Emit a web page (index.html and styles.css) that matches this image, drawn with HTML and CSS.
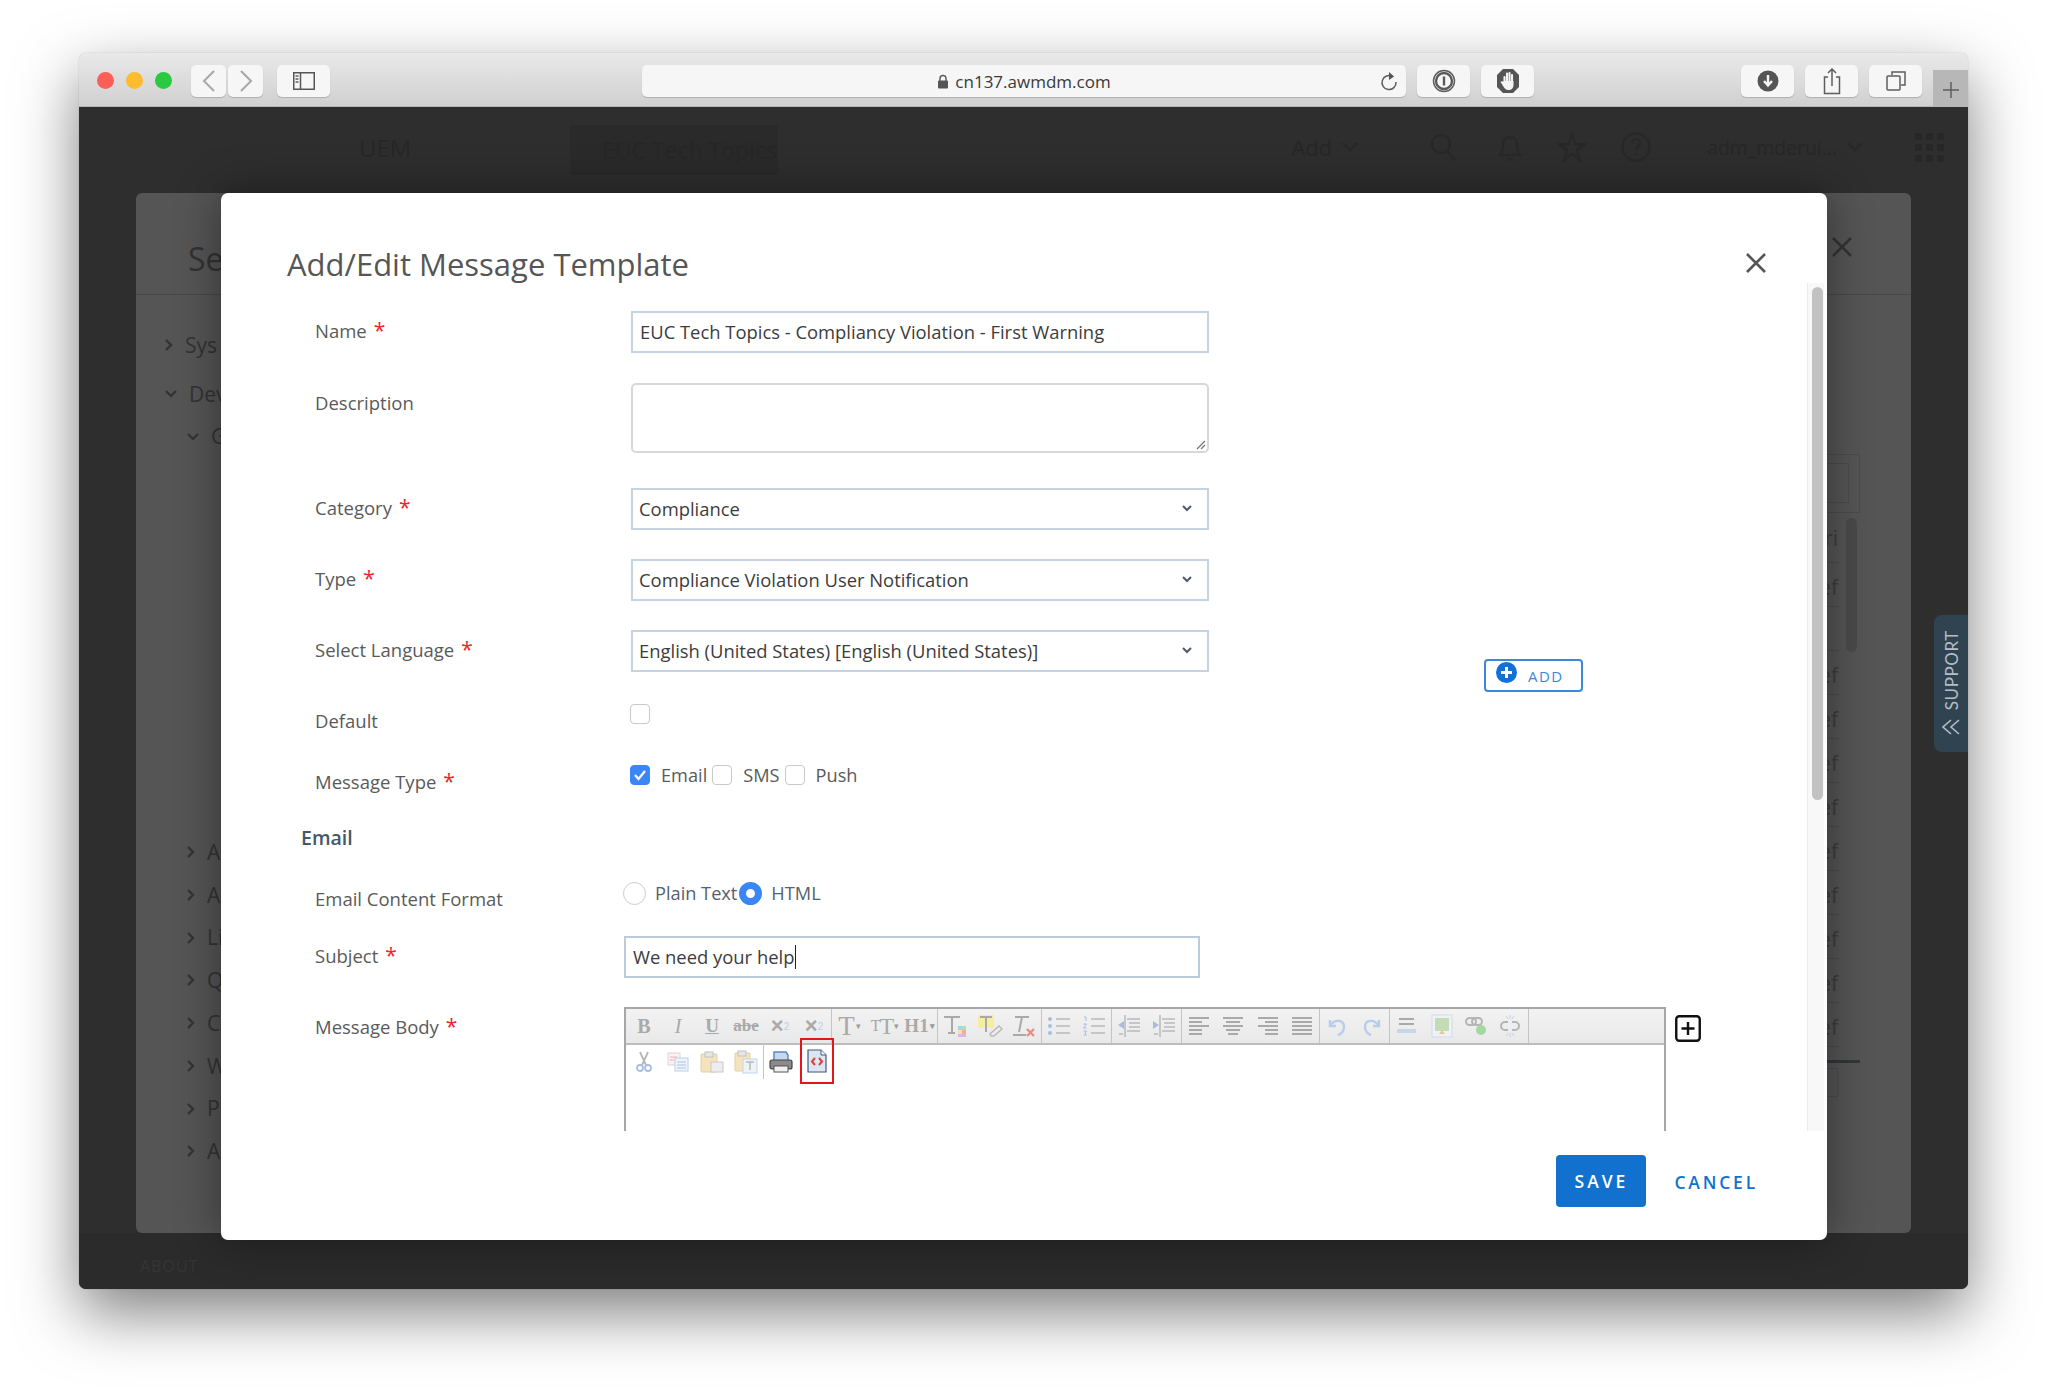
FILE: index.html
```html
<!DOCTYPE html>
<html lang="en">
<head>
<meta charset="utf-8">
<title>Add/Edit Message Template</title>
<link rel="stylesheet" href="styles.css">
</head>
<body>
<div class="window">
  <div class="chrome">
    <div class="lights"><span class="light red"></span><span class="light yellow"></span><span class="light green"></span></div>
    <div class="nav">
      <div class="cbtn back"><svg width="14" height="24" viewBox="0 0 14 24"><path d="M12 2 2 12l10 10" class="ic-nav"/></svg></div>
      <div class="cbtn back"><svg width="14" height="24" viewBox="0 0 14 24"><path d="M2 2l10 10L2 22" class="ic-nav"/></svg></div>
    </div>
    <div class="cbtn wide side"><svg width="22" height="18" viewBox="0 0 22 18"><rect x=".75" y=".75" width="20.5" height="16.5" class="ic-line"/><path d="M7.5 1v16" class="ic-line"/><path d="M2.5 4h3M2.5 7h3M2.5 10h3" class="ic-thin"/></svg></div>
    <div class="address">
      <div class="url"><svg width="12" height="15" viewBox="0 0 12 15"><path d="M3 7V4.500a3 3 0 0 1 6 0V7" class="ic-thin"/><rect x="1" y="6.500" width="10" height="8" rx="1" class="ic-fill"/></svg><span>cn137.awmdm.com</span></div>
      <svg class="reload" width="18" height="22" viewBox="0 0 18 22"><path d="M12.500 6.500A7 7 0 1 0 16 12" class="ic-thin"/><path d="M9 2l5 4.500L9 10z" class="ic-fill"/></svg>
    </div>
    <div class="cbtn wide ext"><svg width="24" height="24" viewBox="0 0 24 24"><circle cx="12" cy="12" r="10.500" class="ic-thin"/><circle cx="12" cy="12" r="8" class="ic-ring"/><path d="M12 7.500v9" class="ic-ring"/></svg></div>
    <div class="cbtn wide ext"><svg width="24" height="26" viewBox="0 0 24 26"><path d="M7 1h10l6 6v12l-6 6H7l-6-6V7z" class="ic-fill"/><path d="M8.500 15V9M11 13V5.500M13.500 13V5M16 14V7" class="ic-hand"/><path d="M7.500 13h10v4c0 3-2 5-5 5s-4-1.500-6-5l-2-3c1-1 2-1 3 0z" class="ic-white"/></svg></div>
    <div class="cbtn wide right-first"><svg width="22" height="22" viewBox="0 0 22 22"><circle cx="11" cy="11" r="10.500" class="ic-fill"/><path d="M11 5v10M7 11l4 4.500 4-4.500" class="ic-whiteline"/></svg></div>
    <div class="cbtn wide right-next"><svg width="18" height="28" viewBox="0 0 18 28"><path d="M5 10H1.500v16.500h15V10H13M9 19V2M5 6l4-4 4 4" class="ic-thin"/></svg></div>
    <div class="cbtn wide right-next"><svg width="20" height="20" viewBox="0 0 20 20"><path d="M6 4V1h13v13h-4" class="ic-thin"/><rect x="1" y="5" width="13" height="14" rx="1" class="ic-thin"/></svg></div>
    <div class="newtab"><svg width="16" height="16" viewBox="0 0 16 16"><path d="M8 0v16M0 8h16" class="ic-thin"/></svg></div>
  </div>

  <div class="page">
    <header class="apphead">
      <span class="dim-brand">UEM</span>
      <div class="dim-org">EUC Tech Topics</div>
      <div class="dim-tools">
        <span class="dim-add">Add</span>
        <svg class="dim-chev" width="16" height="10" viewBox="0 0 16 10"><path d="M1 1l7 7 7-7" class="ic-dim"/></svg>
        <svg class="dim-search" width="28" height="30" viewBox="0 0 28 30"><circle cx="12" cy="12" r="9" class="ic-dim"/><path d="M18 19l8 9" class="ic-dim"/></svg>
        <svg class="dim-bell" width="26" height="30" viewBox="0 0 26 30"><path d="M3 23c3-3 3-7 3-11a7 7 0 0 1 14 0c0 4 0 8 3 11zM10 27h6" class="ic-dim"/></svg>
        <svg class="dim-icon" width="28" height="30" viewBox="0 0 28 30"><path d="M14 2l3.500 10H27l-8 6 3 10-8-6-8 6 3-10-8-6h9.500z" class="ic-dim"/></svg>
        <svg class="dim-icon" width="30" height="30" viewBox="0 0 30 30"><circle cx="15" cy="15" r="13.500" class="ic-dim"/><path d="M11 11c0-5 8-5 8 0 0 3-4 3-4 7M15 21v2" class="ic-dim"/></svg>
        <span class="dim-user">adm_mderui...</span>
        <svg class="dim-chev" width="16" height="10" viewBox="0 0 16 10"><path d="M1 1l7 7 7-7" class="ic-dim"/></svg>
        <div class="dim-apps"><i></i><i></i><i></i><i></i><i></i><i></i><i></i><i></i><i></i></div>
      </div>
    </header>

    <section class="panel">
      <div class="panel-head"><span class="panel-title">Se</span>
        <svg width="20" height="20" viewBox="0 0 20 20"><path d="M1 1l18 18M19 1 1 19" class="ic-panelx"/></svg>
      </div>
      <div class="panel-body">
        <ul class="tree">
          <li class="tree-item"><svg width="8" height="12" viewBox="0 0 8 12"><path d="M1 1l5 5-5 5" class="ic-tree"/></svg>Sys</li>
          <li class="tree-item tree-dev"><svg width="12" height="8" viewBox="0 0 12 8"><path d="M1 1l5 5 5-5" class="ic-tree"/></svg>Dev</li>
          <li class="tree-item tree-sub tree-g"><svg width="12" height="8" viewBox="0 0 12 8"><path d="M1 1l5 5 5-5" class="ic-tree"/></svg>G</li>
          <li class="tree-item tree-sub tree-first"><svg width="8" height="12" viewBox="0 0 8 12"><path d="M1 1l5 5-5 5" class="ic-tree"/></svg>A</li>
          <li class="tree-item tree-sub"><svg width="8" height="12" viewBox="0 0 8 12"><path d="M1 1l5 5-5 5" class="ic-tree"/></svg>A</li>
          <li class="tree-item tree-sub"><svg width="8" height="12" viewBox="0 0 8 12"><path d="M1 1l5 5-5 5" class="ic-tree"/></svg>Li</li>
          <li class="tree-item tree-sub"><svg width="8" height="12" viewBox="0 0 8 12"><path d="M1 1l5 5-5 5" class="ic-tree"/></svg>Q</li>
          <li class="tree-item tree-sub"><svg width="8" height="12" viewBox="0 0 8 12"><path d="M1 1l5 5-5 5" class="ic-tree"/></svg>C</li>
          <li class="tree-item tree-sub"><svg width="8" height="12" viewBox="0 0 8 12"><path d="M1 1l5 5-5 5" class="ic-tree"/></svg>W</li>
          <li class="tree-item tree-sub"><svg width="8" height="12" viewBox="0 0 8 12"><path d="M1 1l5 5-5 5" class="ic-tree"/></svg>P</li>
          <li class="tree-item tree-sub"><svg width="8" height="12" viewBox="0 0 8 12"><path d="M1 1l5 5-5 5" class="ic-tree"/></svg>A</li>
        </ul>
        <div class="grid-side">
          <div class="grid-box"><div class="grid-box-inner"></div></div>
          <div class="grid-scroll"></div>
          <div class="grid-row grid-head">ri</div>
          <div class="grid-row">ef</div>
          <div class="grid-row"></div>
          <div class="grid-row">ef</div>
          <div class="grid-row">ef</div>
          <div class="grid-row">ef</div>
          <div class="grid-row">ef</div>
          <div class="grid-row">ef</div>
          <div class="grid-row">ef</div>
          <div class="grid-row">ef</div>
          <div class="grid-row">ef</div>
          <div class="grid-row">ef</div>
          <div class="grid-end"></div>
          <div class="grid-pager"></div>
        </div>
      </div>
    </section>

    <footer class="appfoot">ABOUT</footer>

    <aside class="support">
      <span class="support-text">SUPPORT</span>
      <svg width="18" height="16" viewBox="0 0 18 16"><path d="M9 1 1 8l8 7M17 1 9 8l8 7" class="ic-support"/></svg>
    </aside>

    <div class="modal">
      <div class="modal-head">
        <h1 class="modal-title">Add/Edit Message Template</h1>
        <svg class="modal-close" width="20" height="20" viewBox="0 0 20 20"><path d="M1 1l18 18M19 1 1 19" class="ic-close"/></svg>
      </div>
      <div class="modal-body">
        <form class="form">
          <div class="row row-name">
            <div class="label">Name<span class="req">*</span></div>
            <div class="field field-input">EUC Tech Topics - Compliancy Violation - First Warning</div>
          </div>
          <div class="row row-desc">
            <div class="label">Description</div>
            <div class="area"><svg class="resize" width="10" height="10" viewBox="0 0 10 10"><path d="M1 9l8-8M5 9l4-4" class="ic-resize"/></svg></div>
          </div>
          <div class="row row-select">
            <div class="label">Category<span class="req">*</span></div>
            <div class="field field-select">Compliance<svg width="10" height="7" viewBox="0 0 10 7"><path d="M1 1l4 4 4-4" class="ic-selchev"/></svg></div>
          </div>
          <div class="row row-select">
            <div class="label">Type<span class="req">*</span></div>
            <div class="field field-select">Compliance Violation User Notification<svg width="10" height="7" viewBox="0 0 10 7"><path d="M1 1l4 4 4-4" class="ic-selchev"/></svg></div>
          </div>
          <div class="row row-lang">
            <div class="label">Select Language<span class="req">*</span></div>
            <div class="field field-select">English (United States) [English (United States)]<svg width="10" height="7" viewBox="0 0 10 7"><path d="M1 1l4 4 4-4" class="ic-selchev"/></svg></div>
            <div class="add-btn"><svg width="21" height="21" viewBox="0 0 21 21"><circle cx="10.500" cy="10.500" r="10.500" class="ic-addc"/><path d="M10.500 5v11M5 10.500h11" class="ic-addp"/></svg><span>ADD</span></div>
          </div>
          <div class="row row-default">
            <div class="label label-tight">Default</div>
            <span class="check check-first"></span>
          </div>
          <div class="row row-msg">
            <div class="label label-tight">Message Type<span class="req">*</span></div>
            <div class="opts">
              <span class="check check-on check-first"><svg width="14" height="12" viewBox="0 0 14 12"><path d="M2 6l3.500 4L12 2" class="ic-check"/></svg></span>
              <span class="opt-text">Email</span>
              <span class="check"></span>
              <span class="opt-text">SMS</span>
              <span class="check"></span>
              <span class="opt-text">Push</span>
            </div>
          </div>
          <h2 class="section">Email</h2>
          <div class="row row-format">
            <div class="label label-shift label-tight">Email Content Format</div>
            <div class="opts">
              <span class="radio"></span>
              <span class="opt-text opt-dark">Plain Text</span>
              <span class="radio radio-on"></span>
              <span class="opt-text opt-dark">HTML</span>
            </div>
          </div>
          <div class="row row-subject">
            <div class="label label-shift">Subject<span class="req">*</span></div>
            <div class="field field-input field-subject">We need your help<span class="caret"></span></div>
          </div>
          <div class="row row-body">
            <div class="label label-shift">Message Body<span class="req">*</span></div>
            <div class="editor">
              <div class="tb-row">
                <div class="tb-group">
                  <span class="tb tb-b">B</span><span class="tb tb-i">I</span><span class="tb tb-u">U</span><span class="tb tb-s">abe</span><span class="tb tb-x">×<sub>2</sub></span><span class="tb tb-x">×<sup>2</sup></span>
                </div>
                <div class="tb-group tb-font">
                  <span class="tb tb-t">T<small>▾</small></span><span class="tb tb-t tb-tt"><em>T</em>T<small>▾</small></span><span class="tb tb-t tb-h">H1<small>▾</small></span>
                </div>
                <div class="tb-group tb-wide">
                  <span class="tb"><svg width="26" height="24" viewBox="0 0 26 24"><path d="M2 3h16M10 3v16M6 19h7" class="ic-tb2"/><rect x="16" y="12" width="4" height="4" class="c-blue"/><rect x="20" y="12" width="4" height="4" class="c-green"/><rect x="16" y="16" width="4" height="4" class="c-yellow"/><rect x="20" y="16" width="4" height="4" class="c-red"/><rect x="16" y="20" width="8" height="3" class="c-violet"/></svg></span>
                  <span class="tb"><svg width="26" height="24" viewBox="0 0 26 24"><rect x="1" y="1" width="16" height="13" class="c-hi"/><path d="M3 3h12M9 3v15" class="ic-tb2"/><path d="M13 20l9-8 3 3-8 7h-3z" class="ic-tb1"/></svg></span>
                  <span class="tb"><svg width="26" height="24" viewBox="0 0 26 24"><path d="M4 3h14M11 3 8 18M2 21h13" class="ic-tb2"/><path d="M16 15l7 7M23 15l-7 7" class="ic-tbred"/></svg></span>
                </div>
                <div class="tb-group tb-wide">
                  <span class="tb"><svg width="24" height="22" viewBox="0 0 24 22"><path d="M9 4h14M9 11h14M9 18h14" class="ic-tb1"/><circle cx="3" cy="4" r="2" class="c-bullet"/><circle cx="3" cy="11" r="2" class="c-bullet"/><circle cx="3" cy="18" r="2" class="c-bullet"/></svg></span>
                  <span class="tb"><svg width="24" height="22" viewBox="0 0 24 22"><path d="M9 4h14M9 11h14M9 18h14" class="ic-tb1"/><path d="M2 2h2v4M1.500 9h3l-3 4h3M1.500 16h3l-1.500 2 1.500 2h-3" class="ic-num"/></svg></span>
                </div>
                <div class="tb-group tb-wide">
                  <span class="tb"><svg width="24" height="24" viewBox="0 0 24 24"><path d="M10 5h13M12 9h11M12 13h11M10 17h13M2 20h4M8 1v22" class="ic-tb1"/><path d="M1 11l6-4v8z" class="c-bullet"/></svg></span>
                  <span class="tb"><svg width="24" height="24" viewBox="0 0 24 24"><path d="M10 5h13M12 9h11M12 13h11M10 17h13M2 20h4M8 1v22" class="ic-tb1"/><path d="M7 11 1 7v8z" class="c-bullet"/></svg></span>
                </div>
                <div class="tb-group tb-wide">
                  <span class="tb"><svg width="22" height="20" viewBox="0 0 22 20"><path d="M1 2h20M1 6h13M1 10h20M1 14h13M1 18h13" class="ic-tb2"/></svg></span>
                  <span class="tb"><svg width="22" height="20" viewBox="0 0 22 20"><path d="M1 2h20M4 6h14M1 10h20M4 14h14M6 18h10" class="ic-tb2"/></svg></span>
                  <span class="tb"><svg width="22" height="20" viewBox="0 0 22 20"><path d="M1 2h20M8 6h13M1 10h20M8 14h13M8 18h13" class="ic-tb2"/></svg></span>
                  <span class="tb"><svg width="22" height="20" viewBox="0 0 22 20"><path d="M1 2h20M1 6h20M1 10h20M1 14h20M1 18h20" class="ic-tb2"/></svg></span>
                </div>
                <div class="tb-group tb-wide">
                  <span class="tb"><svg width="20" height="22" viewBox="0 0 20 22"><path d="M3 5v6h6M3 11c4-7 14-7 14 1 0 4-3 7-6 8" class="ic-hist"/></svg></span>
                  <span class="tb"><svg width="20" height="22" viewBox="0 0 20 22"><path d="M17 5v6h-6M17 11C13 4 3 4 3 12c0 4 3 7 6 8" class="ic-hist"/></svg></span>
                </div>
                <div class="tb-group tb-wide">
                  <span class="tb"><svg width="22" height="20" viewBox="0 0 22 20"><path d="M3 3h15M3 8h15" class="ic-tb2"/><rect x="1" y="13" width="19" height="4" class="c-hr"/></svg></span>
                  <span class="tb"><svg width="22" height="24" viewBox="0 0 22 24"><rect x="1" y="1" width="20" height="22" class="c-imgbox"/><rect x="4" y="4" width="14" height="13" class="c-img"/><path d="M8 20l3-4 3 4z" class="c-imgsun"/></svg></span>
                  <span class="tb"><svg width="22" height="22" viewBox="0 0 22 22"><rect x="1" y="3" width="10" height="7" rx="3.500" class="ic-link"/><rect x="7" y="3" width="10" height="7" rx="3.500" class="ic-link"/><circle cx="16" cy="15" r="5" class="c-linkg"/></svg></span>
                  <span class="tb"><svg width="22" height="24" viewBox="0 0 22 24"><path d="M9 8H6a4 4 0 0 0 0 8h3M13 8h3a4 4 0 0 1 0 8h-3" class="ic-link"/><path d="M11 1v4M7 2l2 3M15 2l-2 3M11 19v4M7 22l2-3M15 22l-2-3" class="ic-sparks"/></svg></span>
                </div>
              </div>
              <div class="tb-row2">
                <div class="tb-group tb-clip">
                  <span class="tb"><svg width="16" height="22" viewBox="0 0 16 22"><path d="M4 1l6 13M12 1 6 14" class="ic-cut"/><circle cx="4" cy="17" r="3" class="ic-cut2"/><circle cx="12" cy="17" r="3" class="ic-cut2"/></svg></span>
                  <span class="tb"><svg width="22" height="20" viewBox="0 0 22 20"><rect x="1" y="1" width="12" height="12" class="c-copy1"/><rect x="8" y="6" width="13" height="13" class="c-copy2"/><path d="M3 5h7M3 8h4" class="ic-redline"/><path d="M10 10h9M10 13h9M10 16h9" class="ic-blueline"/></svg></span>
                  <span class="tb"><svg width="24" height="22" viewBox="0 0 24 22"><rect x="1" y="3" width="16" height="18" rx="1" class="c-paste"/><rect x="5" y="1" width="8" height="5" class="c-clip"/><rect x="11" y="11" width="12" height="10" class="c-sheet"/></svg></span>
                  <span class="tb"><svg width="24" height="24" viewBox="0 0 24 24"><rect x="1" y="3" width="15" height="18" rx="1" class="c-paste"/><rect x="4" y="1" width="8" height="5" class="c-clip"/><rect x="9" y="9" width="14" height="14" class="c-sheet2"/><path d="M12 12h8M16 12v8" class="ic-tb1"/></svg></span>
                </div>
                <div class="tb-group tb-print">
                  <span class="tb"><svg width="24" height="22" viewBox="0 0 24 22"><path d="M5 10V1h12l2 3v6z" class="c-printp"/><rect x="1" y="9" width="22" height="9" rx="2" class="c-print"/><rect x="5" y="15" width="14" height="6" class="c-printo"/></svg></span>
                </div>
                <div class="source-btn"><svg width="20" height="24" viewBox="0 0 20 24"><path d="M1 1h13l5 5v17H1z" class="c-source"/><path d="M14 1v5h5" class="c-sourcef"/><path d="M8 9l-3 3.500L8 16M12 9l3 3.500-3 3.500" class="ic-srcred"/></svg></div>
              </div>
            </div>
            <svg class="expand" width="26" height="27" viewBox="0 0 26 27"><rect x="1.250" y="1.250" width="23.500" height="24.500" rx="3" class="ic-expand"/><path d="M13 7v13M6.500 13.500h13" class="ic-expand"/></svg>
          </div>
        </form>
        <div class="scrolltrack"><div class="scrollthumb"></div></div>
      </div>
      <div class="modal-foot">
        <div class="btn-save">SAVE</div>
        <div class="btn-cancel">CANCEL</div>
      </div>
    </div>
  </div>
</div>
</body>
</html>
```

FILE: styles.css
```css
* { box-sizing: border-box; }
html, body { margin: 0; padding: 0; }
body { width: 2048px; height: 1395px; background: #fff; font-family: "Open Sans", "Liberation Sans", sans-serif; overflow: hidden; }

.window { width: 1889px; height: 1236px; margin: 53px 0 0 79px; border-radius: 7px; box-shadow: 0 24px 62px rgba(0,0,0,.5), 0 0 1px rgba(0,0,0,.4); display: flex; flex-direction: column; overflow: hidden; position: relative; }

/* Safari chrome */
.chrome { height: 54px; flex: none; display: flex; align-items: flex-start; padding: 12px 0 0 18px; background: linear-gradient(#e9e9e9, #d0d0d0); border-bottom: 1px solid #b6b6b6; position: relative; }
.lights { display: flex; gap: 12px; width: 94px; padding-top: 7px; }
.light { width: 17px; height: 17px; border-radius: 50%; }
.red { background: #fb5f57; }
.yellow { background: #fdbb2e; }
.green { background: #29c941; }
.nav { display: flex; gap: 2px; }
.cbtn { height: 32px; background: #f6f6f6; border-radius: 5px; box-shadow: 0 1px 1px rgba(0,0,0,.18); display: flex; align-items: center; justify-content: center; }
.back { width: 35px; }
.wide { width: 53px; }
.side { margin-left: 14px; }
.address { width: 764px; height: 32px; margin-left: 312px; background: #f6f6f6; border-radius: 5px; box-shadow: 0 1px 1px rgba(0,0,0,.18); display: flex; align-items: center; position: relative; }
.url { flex: 1; display: flex; align-items: center; justify-content: center; gap: 6px; font-size: 17px; color: #3a3a3a; padding-left: 26px; }
.reload { margin-right: 8px; }
.ext { margin-left: 11px; }
.right-first { margin-left: 207px; }
.right-next { margin-left: 11px; }
.newtab { position: absolute; right: 0; bottom: 0; width: 35px; height: 36px; background: #b7b7b7; display: flex; align-items: center; justify-content: center; padding-top: 3px; }
.ic-nav { fill: none; stroke: #a8a8a8; stroke-width: 2; }
.ic-line { fill: none; stroke: #555; stroke-width: 1.5; }
.ic-thin { fill: none; stroke: #5e5e5e; stroke-width: 1.5; }
.ic-fill { fill: #555; }
.ic-ring { fill: none; stroke: #5a5a5a; stroke-width: 2.4; }
.ic-white { fill: #f4f4f4; }
.ic-hand { fill: none; stroke: #f4f4f4; stroke-width: 2.1; stroke-linecap: round; }
.ic-whiteline { fill: none; stroke: #f6f6f6; stroke-width: 2.4; }

/* dimmed page */
.page { flex: 1; display: flex; flex-direction: column; background: #2e2e2e; position: relative; }
.apphead { height: 86px; flex: none; display: flex; align-items: flex-start; color: #272727; }
.dim-brand { font-size: 24px; margin: 24px 0 0 280px; width: 211px; line-height: 34px; }
.dim-org { width: 208px; height: 50px; margin-top: 18px; background: #2a2a2a; border-radius: 4px; font-size: 23px; line-height: 50px; padding-left: 32px; white-space: nowrap; overflow: hidden; }
.dim-tools { margin-left: auto; display: flex; align-items: center; height: 40px; margin-top: 20px; }
.dim-add { font-size: 22px; }
.dim-chev { margin: 0 0 0 10px; }
.dim-search { margin-left: 71px; }
.dim-bell { margin-left: 40px; }
.dim-icon { margin-left: 35px; }
.dim-user { font-size: 19.4px; margin-left: 56px; white-space: nowrap; }
.dim-apps { display: grid; grid-template-columns: repeat(3, 7px); gap: 4px 4px; margin: 0 24px 0 52px; }
.dim-apps i { width: 7px; height: 7px; background: #272727; display: block; border-radius: 1px; }
.ic-dim { fill: none; stroke: #282828; stroke-width: 2.4; }

.panel { flex: none; height: 1040px; margin: 0 57px; width: 1775px; background: #555; border-radius: 6px; display: flex; flex-direction: column; overflow: hidden; }
.panel-head { height: 102px; flex: none; border-bottom: 1px solid #484848; display: flex; align-items: flex-start; justify-content: space-between; padding: 44px 59px 0 52px; }
.panel-title { font-size: 32px; line-height: 44px; color: #333; }
.ic-panelx { fill: none; stroke: #333; stroke-width: 2.5; }
.panel-body { flex: 1; display: flex; justify-content: space-between; }
.tree { list-style: none; margin: 0; padding: 29px 0 0 29px; width: 300px; color: #333; font-size: 21px; }
.tree-item { height: 42.7px; line-height: 42.7px; display: flex; align-items: center; gap: 12px; white-space: nowrap; }
.tree-dev { margin-top: 6px; }
.tree-sub { padding-left: 22px; }
.tree-first { margin-top: 373px; }
.ic-tree { fill: none; stroke: #333; stroke-width: 2.2; }
.grid-side { width: 200px; margin-right: 51px; padding-top: 159px; position: relative; color: #3c3c3c; font-size: 21px; }
.grid-box { height: 59px; border: 1px solid #4c4c4c; padding: 8px 10px 9px 0; }
.grid-box-inner { height: 40px; border: 1px solid #4c4c4c; }
.grid-scroll { position: absolute; right: 3px; top: 223px; width: 11px; height: 134px; background: #4a4a4a; border-radius: 6px; }
.grid-row { width: 179px; height: 44px; border-bottom: 1px solid #4b4b4b; text-align: right; line-height: 49px; padding-right: 1px; overflow: hidden; }
.grid-head { height: 50px; line-height: 50px; }
.grid-end { width: 200px; height: 3px; margin-top: 13px; background: #33363a; }
.grid-pager { width: 178px; height: 29px; margin-top: 5px; border: 1px solid #4b4b4b; }
.appfoot { flex: 1; background: #2b2b2b; color: #353535; font-size: 16px; letter-spacing: 1px; padding: 22px 0 0 61px; }

.support { position: absolute; right: 0; top: 508px; width: 34px; height: 137px; background: #2f4351; border-radius: 8px 0 0 8px; display: flex; flex-direction: column; align-items: center; padding-top: 15px; gap: 9px; color: #b4bec6; }
.support-text { writing-mode: vertical-rl; transform: rotate(180deg); font-family: Lato, sans-serif; font-size: 17px; letter-spacing: .6px; }
.ic-support { fill: none; stroke: #b4bec6; stroke-width: 1.6; }

/* modal */
.modal { position: absolute; left: 142px; top: 86px; width: 1606px; height: 1047px; background: #fff; border-radius: 7px; box-shadow: 0 0 45px rgba(0,0,0,.42); display: flex; flex-direction: column; }
.modal-head { height: 90px; flex: none; display: flex; justify-content: space-between; align-items: flex-start; padding: 49px 61px 0 66px; }
.modal-title { margin: 0; font-size: 31px; font-weight: 400; line-height: 44px; color: #565656; }
.modal-close { margin-top: 11px; }
.ic-close { fill: none; stroke: #555; stroke-width: 2.6; }
.modal-body { height: 848px; flex: none; display: flex; overflow: hidden; }
.form { flex: 1; min-width: 0; padding: 28px 0 0 94px; }
.scrolltrack { width: 17px; margin-right: 3px; flex: none; background: #f8f8f8; border-left: 1px solid #ececec; padding: 4px 1px 0 4px; }
.scrollthumb { height: 513px; background: #c2c2c2; border-radius: 6px; }

.row { display: flex; align-items: flex-start; }
.label { width: 316px; height: 42px; flex: none; font-size: 18.5px; line-height: 40px; color: #5a5a5a; white-space: nowrap; }
.label-tight { margin-top: -3px; }
.label-shift { width: 309px; }
.req { color: #f5222d; margin-left: 7px; font-size: 21px; line-height: 1; }
.field { width: 578px; height: 42px; border: 2px solid #c5d2df; background: #fff; color: #3c3c3c; font-size: 18.4px; display: flex; align-items: center; white-space: nowrap; padding-bottom: 1px; }
.field-input { padding-left: 7px; }
.field-select { padding: 0 15px 1px 6px; justify-content: space-between; }
.ic-selchev { fill: none; stroke: #4f5b67; stroke-width: 2; }
.area { width: 578px; height: 70px; border: 2px solid #d8d8d8; border-radius: 5px; background: #fff; position: relative; }
.resize { position: absolute; right: 1px; bottom: 1px; }
.ic-resize { fill: none; stroke: #777; stroke-width: 1.3; }

.row-name { margin-bottom: 30px; }
.row-desc { margin-bottom: 35px; }
.row-select { margin-bottom: 29px; }
.row-lang { margin-bottom: 32px; height: 42px; }
.row-default { height: 20px; margin-bottom: 41px; }
.row-msg { height: 20px; margin-bottom: 38px; }
.row-format { height: 23px; margin-bottom: 31px; }
.row-subject { margin-bottom: 29px; }

.add-btn { margin: 29px 0 0 275px; width: 99px; height: 33px; border: 2px solid #3d88d9; border-radius: 4px; display: flex; align-items: flex-start; padding: 1px 0 0 10px; gap: 11px; color: #3d88d9; font-size: 15px; letter-spacing: 1.4px; }
.add-btn span { line-height: 31px; margin-top: -1px; }
.ic-addc { fill: #1271d6; }
.ic-addp { fill: none; stroke: #fff; stroke-width: 3; }

.check { width: 20px; height: 20px; flex: none; border: 1px solid #c9c9c9; border-radius: 4px; background: #fff; display: flex; align-items: center; justify-content: center; }
.check-first { margin-left: -1px; }
.check-on { background: #3a86f7; border-color: #3a86f7; }
.ic-check { fill: none; stroke: #fff; stroke-width: 2.2; }
.opts { display: flex; align-items: center; height: 100%; }
.row-format .opts { margin-left: -1px; }
.opt-text { font-size: 18.2px; color: #5a5a5a; margin-left: 11px; margin-right: 5px; white-space: nowrap; line-height: 20px; }
.opt-dark { color: #55616e; margin-left: 9px; margin-right: 2px; margin-bottom: 2px; }
.radio { width: 23px; height: 23px; flex: none; border: 1.5px solid #cdcdcd; border-radius: 50%; background: #fff; }
.radio-on { background: #fff; border: 7.5px solid #3a86f7; }
.section { margin: 0 0 29px -14px; height: 30px; font-size: 19.5px; line-height: 30px; font-weight: 600; color: #44566c; }
.field-subject { width: 576px; border-color: #bccbdc; }
.caret { width: 1px; height: 24px; background: #222; margin-left: 1px; }

/* editor */
.row-body { align-items: flex-start; }
.editor { width: 1042px; height: 190px; flex: none; border: 2px solid #a6a6a6; border-bottom: 0; background: #fff; }
.tb-row { height: 36px; background: linear-gradient(#f2f2f2, #e9e9e9); border-bottom: 2px solid #bdbdbd; display: flex; padding-left: 1px; }
.tb-group { display: flex; border-right: 1px solid #c4c4c4; height: 34px; }
.tb { width: 34px; height: 34px; display: flex; align-items: center; justify-content: center; color: #a9a9a9; font-family: "Liberation Serif", serif; flex: none; }
.tb-font .tb { width: 35px; }
.tb-wide .tb { width: 34.4px; }
.tb-b { font-weight: 700; font-size: 20px; }
.tb-i { font-style: italic; font-size: 20px; }
.tb-u { text-decoration: underline; font-size: 19px; font-weight: 700; }
.tb-s { text-decoration: line-through; font-size: 17px; font-weight: 700; }
.tb-x { font-family: "Liberation Sans", sans-serif; font-size: 22px; font-weight: 700; }
.tb-x sub, .tb-x sup { color: #c0cde4; font-size: 10px; font-weight: 400; }
.tb-t { font-size: 27px; }
.tb-tt { font-size: 24px; letter-spacing: -1px; }
.tb-tt em { font-style: normal; font-size: 16px; }
.tb-h { font-size: 19px; font-weight: 700; }
.tb-t small { font-size: 9px; margin-left: 1px; color: #999; }
.tb-row2 { height: 33px; display: flex; padding-left: 1px; position: relative; }
.tb-clip { height: 34px; }
.tb-print { border-right: 0; }
.source-btn { position: absolute; left: 174px; top: -7px; width: 34px; height: 46px; border: 2px solid #e8141c; display: flex; align-items: center; justify-content: center; }
.expand { margin: 8px 0 0 9px; flex: none; }
.ic-expand { fill: none; stroke: #111; stroke-width: 2.4; }
.ic-tb1 { fill: none; stroke: #b9b9b9; stroke-width: 1.5; }
.ic-tb2 { fill: none; stroke: #a9a9a9; stroke-width: 2; }
.ic-tbred { fill: none; stroke: #ec8a8a; stroke-width: 2.4; }
.ic-hist { fill: none; stroke: #b7cdea; stroke-width: 2.4; }
.ic-num { fill: none; stroke: #a9bbdf; stroke-width: 1; }
.ic-link { fill: none; stroke: #b5b5b5; stroke-width: 2; }
.ic-sparks { fill: none; stroke: #bcd3ec; stroke-width: 1; }
.ic-cut { fill: none; stroke: #b7b7b7; stroke-width: 1.8; }
.ic-cut2 { fill: none; stroke: #a8bede; stroke-width: 1.8; }
.ic-redline { fill: none; stroke: #eeb1b1; stroke-width: 1; }
.ic-blueline { fill: none; stroke: #a9c4e4; stroke-width: 1; }
.ic-srcred { fill: none; stroke: #e23b32; stroke-width: 2; }
.c-blue { fill: #a4d5ef; }
.c-green { fill: #aee2b0; }
.c-yellow { fill: #f3e4a0; }
.c-red { fill: #f1a9a9; }
.c-violet { fill: #dcb5ef; }
.c-hi { fill: #f5ee9e; }
.c-bullet { fill: #a9bce0; }
.c-hr { fill: #c7d7ea; }
.c-imgbox { fill: #eef2f6; stroke: #cfdbe8; }
.c-img { fill: #c3dcb5; }
.c-imgsun { fill: #e6c98a; }
.c-linkg { fill: #a5d8a0; }
.c-copy1 { fill: #fbf1f1; stroke: #e4d3d3; }
.c-copy2 { fill: #eef4fb; stroke: #bcd0e8; }
.c-paste { fill: #f4e3bd; stroke: #e0cfa5; }
.c-clip { fill: #e6e6e6; stroke: #c2c2c2; }
.c-sheet { fill: #ededed; stroke: #c9c9c9; }
.c-sheet2 { fill: #eef3f9; stroke: #c3d5ea; }
.c-printp { fill: #c5d8f0; stroke: #5b89c8; stroke-width: 1.5; }
.c-print { fill: #8a8a8a; stroke: #444; stroke-width: 1.2; }
.c-printo { fill: #f1f1f1; stroke: #555; }
.c-source { fill: #dbe6f2; stroke: #3f5a7c; stroke-width: 1.2; }
.c-sourcef { fill: #f5f8fb; stroke: #3f5a7c; stroke-width: 1; }

/* footer buttons */
.modal-foot { flex: 1; display: flex; justify-content: flex-end; align-items: flex-start; padding: 24px 72px 0 0; gap: 28px; }
.btn-save { width: 90px; height: 52px; background: #1271cf; border-radius: 4px; color: #fff; font-size: 17.5px; font-weight: 600; letter-spacing: 3px; display: flex; align-items: center; justify-content: center; }
.btn-cancel { color: #1271cf; font-size: 17.5px; font-weight: 600; letter-spacing: 2.8px; line-height: 54px; margin-right: -3px; }
```
